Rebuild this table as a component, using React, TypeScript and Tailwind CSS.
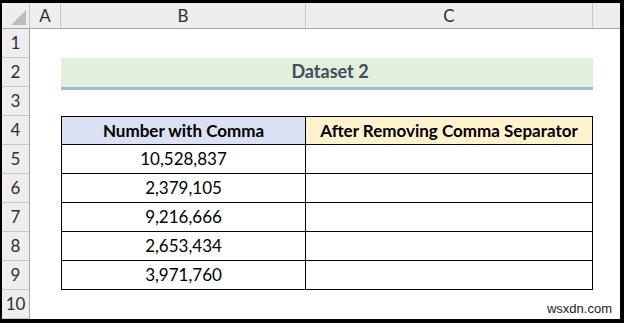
const rows = [1, 2, 3, 4, 5, 6, 7, 8, 9, 10];
const numbers = ['10,528,837', '2,379,105', '9,216,666', '2,653,434', '3,971,760'];

const hdr = 'flex items-center justify-center bg-[#eeeeee] text-[#2e2e2e] text-[17px] border-[#c8c8c8]';
const cell = 'flex items-center justify-center border-black text-[17px] text-black';

export default function App() {
    return (
        <div className="relative h-[323px] w-[624px] bg-black pt-[3px] pl-[2px] pr-[4px] pb-[4px] font-['Lato',sans-serif]">
            <div className="grid h-full w-full grid-cols-[28px_31px_245px_287px_1fr] grid-rows-[26px_repeat(10,29px)] bg-white">
                {/* Column headers */}
                <div className={`${hdr} items-end justify-end border-r border-b border-r-[#c8c8c8] border-b-[#a6a6a6] pr-[3px] pb-[3px]`}>
                    <svg width="15" height="15" viewBox="0 0 15 15">
                        <polygon points="15,0 15,15 0,15" fill="#bdbdbd" />
                    </svg>
                </div>
                <div className={`${hdr} border-r border-b border-b-[#a6a6a6]`}>A</div>
                <div className={`${hdr} border-r border-b border-b-[#a6a6a6]`}>B</div>
                <div className={`${hdr} border-r border-b border-b-[#a6a6a6]`}>C</div>
                <div className={`${hdr} border-b border-b-[#a6a6a6]`} />

                {rows.map((r) => (
                    <RowCells key={r} r={r} />
                ))}
            </div>

            {/* watermark */}
            <span className="absolute right-[12px] bottom-[8px] font-['Liberation_Sans',sans-serif] text-[13px] leading-none text-[#222222]">
                wsxdn.com
            </span>
        </div>
    );
}

function RowCells({ r }: { r: number }) {
    const rowHdr = (
        <div className={`${hdr} border-b border-r border-r-[#a6a6a6]`}>{r}</div>
    );

    if (r === 2) {
        return (
            <>
                {rowHdr}
                <div />
                <div className="col-span-2 flex h-[32px] items-center justify-center self-start border-b-[3px] border-[#a7b7d7] bg-[#e2efda] pl-[6px] pb-[2px] text-[18px] font-bold text-[#3e4d61]">
                    Dataset 2
                </div>
                <div />
            </>
        );
    }

    if (r === 4) {
        return (
            <>
                {rowHdr}
                <div />
                <div className={`${cell} border-t border-l border-r border-b bg-[#d9e1f2] font-bold`}>Number with Comma</div>
                <div className={`${cell} border-t border-r border-b bg-[#fff2cc] font-bold`}>After Removing Comma Separator</div>
                <div />
            </>
        );
    }

    if (r >= 5 && r <= 9) {
        return (
            <>
                {rowHdr}
                <div />
                <div className={`${cell} border-l border-r border-b`}>{numbers[r - 5]}</div>
                <div className={`${cell} border-r border-b`} />
                <div />
            </>
        );
    }

    return (
        <>
            {rowHdr}
            <div />
            <div />
            <div />
            <div />
        </>
    );
}
